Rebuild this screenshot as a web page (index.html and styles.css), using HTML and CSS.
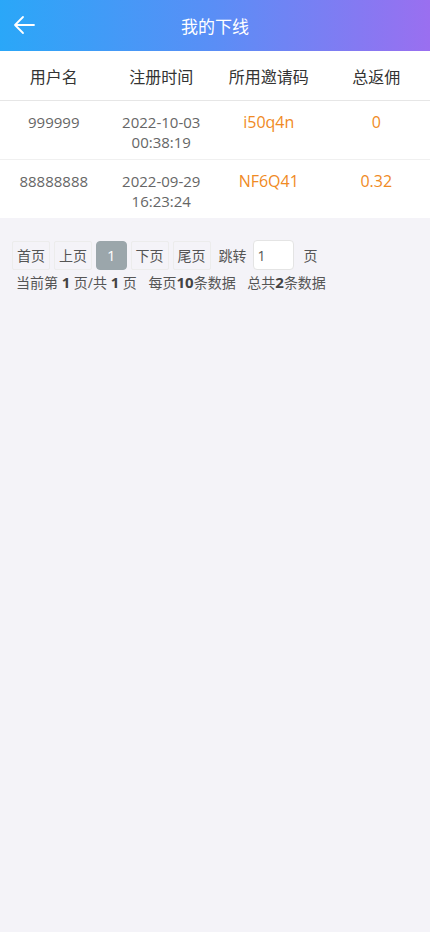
FILE: index.html
```html
<!DOCTYPE html>
<html lang="zh-CN">

<head>
    <meta charset="UTF-8">
    <meta name="viewport" content="width=device-width, initial-scale=1.0">
    <title>我的下线</title>
    <link rel="stylesheet" href="styles.css">
</head>

<body>
    <div class="head">
        <a class="back">
            <svg width="22" height="20" viewBox="0 0 22 20" fill="none" stroke="#fff" stroke-width="1.8" stroke-linecap="round" stroke-linejoin="round">
                <path d="M21 10H2M10 2L2 10l8 8" />
            </svg>
        </a>
        <div class="title">我的下线</div>
    </div>

    <table class="list">
        <thead>
            <tr>
                <th>用户名</th>
                <th>注册时间</th>
                <th>所用邀请码</th>
                <th>总返佣</th>
            </tr>
        </thead>
        <tbody>
            <tr>
                <td>999999</td>
                <td>2022-10-03<br>00:38:19</td>
                <td class="orange">i50q4n</td>
                <td class="orange">0</td>
            </tr>
            <tr>
                <td>88888888</td>
                <td>2022-09-29<br>16:23:24</td>
                <td class="orange">NF6Q41</td>
                <td class="orange">0.32</td>
            </tr>
        </tbody>
    </table>

    <div class="pager">
        <div class="pages">
            <span class="btn">首页</span>
            <span class="btn">上页</span>
            <span class="btn current">1</span>
            <span class="btn">下页</span>
            <span class="btn">尾页</span>
            <span class="jump">跳转</span>
            <input type="text" class="page-input" value="1">
            <span class="jump">页</span>
        </div>
        <div class="info">
            当前第 <b>1</b> 页/共 <b>1</b> 页
            <span class="gap">每页<b>10</b>条数据</span>
            <span class="gap">总共<b>2</b>条数据</span>
        </div>
    </div>
</body>

</html>
```

FILE: styles.css
```css
body {
    margin: 0;
    background-color: #f4f3f8;
    font-family: "Open Sans", "Noto Sans CJK SC", sans-serif;
    color: #333;
}

.head {
    height: 51px;
    display: flex;
    align-items: center;
    justify-content: center;
    position: relative;
    background: linear-gradient(90deg, #2aa7f8, #5a8ef6 50%, #9a6ff0);
}

.back {
    position: absolute;
    left: 13px;
    top: 15px;
    display: flex;
}

.title {
    color: #fff;
    font-size: 17px;
}

.list {
    width: 100%;
    border-collapse: collapse;
    background-color: #fff;
    table-layout: fixed;
}

.list th {
    height: 49px;
    font-weight: normal;
    font-size: 16px;
    color: #333;
    border-bottom: 1px solid #e6e6e6;
    padding: 0;
}

.list td {
    text-align: center;
    vertical-align: top;
    font-size: 15px;
    line-height: 20px;
    color: #666;
    padding: 11px 0 7px;
    border-bottom: 1px solid #f0f0f0;
}

.list tbody tr:last-child td {
    border-bottom: none;
}

.list td.orange {
    color: #f08a24;
    font-size: 16px;
}

.pager {
    padding: 22px 12px 0;
    font-size: 14px;
    color: #555;
}

.pages {
    display: flex;
    align-items: center;
}

.btn {
    display: inline-block;
    height: 27px;
    line-height: 27px;
    padding: 0 4px;
    margin-right: 4px;
    border: 1px solid #ececec;
    border-radius: 2px;
    background-color: #f4f3f8;
}

.btn.current {
    background-color: #9ba6ab;
    border-color: #9ba6ab;
    color: #fff;
    border-radius: 4px;
    padding: 0 10px;
    font-size: 15px;
}

.jump {
    margin: 0 6px 0 4px;
}

.page-input {
    width: 31px;
    height: 28px;
    margin: 0 6px 0 0;
    padding: 0 4px;
    border: 1px solid #e4e4e4;
    border-radius: 4px;
    font-size: 14px;
    font-family: inherit;
    color: #555;
}

.info {
    margin-top: 2px;
    padding-left: 4px;
    line-height: 20px;
}

.info b {
    font-size: 15px;
    color: #444;
}

.gap {
    margin-left: 8px;
}
```
